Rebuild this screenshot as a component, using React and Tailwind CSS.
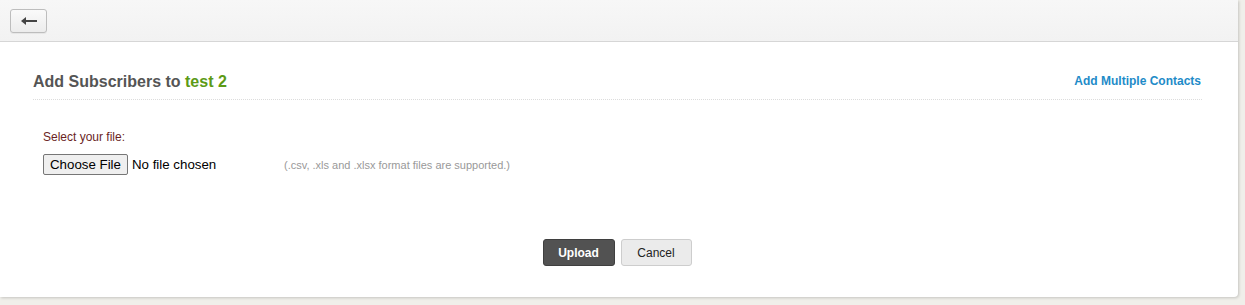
export default function App() {
  return (
    <div className="min-h-[305px] w-full bg-[#f0efea]" style={{ fontFamily: '"Liberation Sans", Arial, sans-serif' }}>
      <div className="w-[1238px] h-[297px] bg-white rounded-br-[4px] shadow-[1px_1px_3px_rgba(0,0,0,0.18)] flex flex-col">
        {/* top bar */}
        <div className="h-[42px] bg-gradient-to-b from-[#f7f7f7] to-[#f2f2f2] border-b border-[#d6d6d6] px-[10px] pt-[9px]">
          <button className="w-[37px] h-[24px] rounded-[3px] border border-[#bdbdbd] bg-gradient-to-b from-[#fafafa] to-[#ececec] flex items-center justify-center shadow-[0_1px_0_rgba(0,0,0,0.05)]">
            <svg width="18" height="10" viewBox="0 0 18 10">
              <path d="M1 5 L6 1 L6 4 L17 4 L17 6 L6 6 L6 9 Z" fill="#444" />
            </svg>
          </button>
        </div>

        {/* content */}
        <div className="px-[33px] pt-[31px]">
          <div className="flex items-end justify-between border-b border-dotted border-[#dcdcdc] pb-[8px] mr-[3px]">
            <h2 className="text-[16px] font-bold text-[#555] leading-[18px]">
              Add Subscribers to <span className="text-[#5c9a16]">test 2</span>
            </h2>
            <a className="text-[12px] font-bold text-[#1e8bc8] leading-[14px] mb-[3px] mr-[1px]">Add Multiple Contacts</a>
          </div>

          <div className="pl-[10px] pt-[30px]">
            <div className="text-[12px] text-[#6b1f1f] leading-[14px]">Select your file:</div>
            <div className="flex items-center mt-[10px]">
              <div className="flex items-center w-[241px]">
                <span className="h-[21px] px-[6px] border border-[#767676] rounded-[2px] bg-[#efefef] text-[13.3px] text-black leading-[19px]">Choose File</span>
                <span className="ml-[4px] text-[13.3px] text-black">No file chosen</span>
              </div>
              <span className="text-[11px] text-[#999] mt-[2px]">(.csv, .xls and .xlsx format files are supported.)</span>
            </div>
          </div>

          <div className="flex justify-center gap-[6px] mt-[64px] pr-[4px]">
            <button className="w-[72px] h-[27px] rounded-[3px] bg-[#525252] border border-[#3f3f3f] text-white text-[12px] font-bold">Upload</button>
            <button className="w-[71px] h-[27px] rounded-[3px] bg-[#ebebeb] border border-[#cdcdcd] text-[#222] text-[12px]">Cancel</button>
          </div>
        </div>
      </div>
    </div>
  );
}
